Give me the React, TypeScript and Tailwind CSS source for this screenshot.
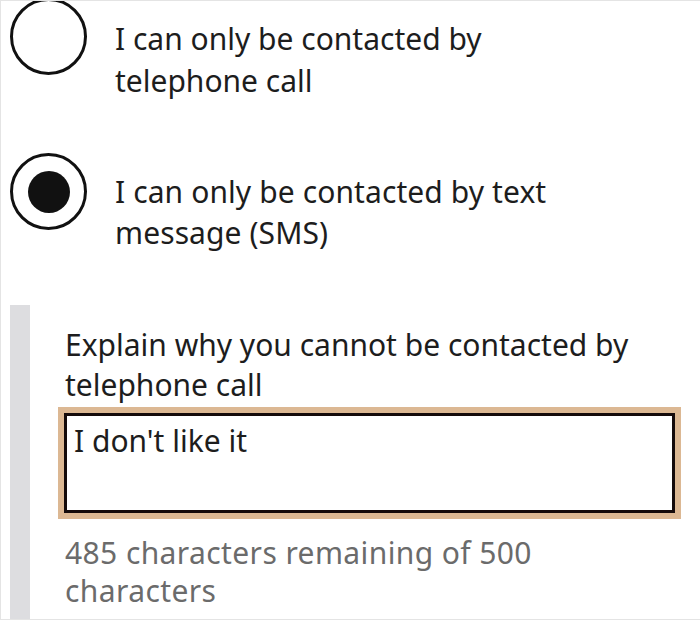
import React from "react";

const font = { fontFamily: '"Noto Sans", "Open Sans", sans-serif' };

function Radio({ checked }: { checked?: boolean }) {
  return (
    <div className="flex h-[77px] w-[77px] shrink-0 items-center justify-center rounded-full border-[3px] border-[#111] bg-white">
      {checked && <div className="h-[42px] w-[42px] rounded-full bg-[#111]" />}
    </div>
  );
}

export default function App() {
  return (
    <div
      className="relative h-[620px] w-[700px] overflow-hidden border-l border-t border-b border-[#e4e4e4] bg-white text-[#1d1d1d]"
      style={font}
    >
      <div className="flex flex-col pl-[9px]">
        <div className="mt-[-3px] flex items-start gap-[28px]">
          <Radio />
          <div className="mt-[20px] text-[30px] leading-[42px]">
            I can only be contacted by
            <br />
            telephone call
          </div>
        </div>
        <div className="mt-[51px] flex items-start gap-[28px]">
          <Radio checked />
          <div className="mt-[18px] text-[30px] leading-[41px] tracking-[0.1px]">
            I can only be contacted by text
            <br />
            message (SMS)
          </div>
        </div>
      </div>
      <div className="mt-[52px] flex pl-[9px]">
        <div className="h-[320px] w-[20px] shrink-0 bg-[#dddde0]" />
        <div className="flex flex-col pl-[35px] pt-[20px]">
          <div className="text-[30px] leading-[40px]">
            Explain why you cannot be contacted by
            <br />
            telephone call
          </div>
          <div className="ml-[-7px] mt-[2px] w-[623px] border-[6px] border-[#dcb893]">
            <div className="h-[100px] border-[3px] border-[#140a0a] bg-white px-[7px] pt-[5px] text-[30px] leading-[40px]">
              I don't like it
            </div>
          </div>
          <div className="mt-[15px] text-[30px] leading-[38px] tracking-[0.4px] text-[#6b6b6b]">
            485 characters remaining of 500
            <br />
            characters
          </div>
        </div>
      </div>
    </div>
  );
}
